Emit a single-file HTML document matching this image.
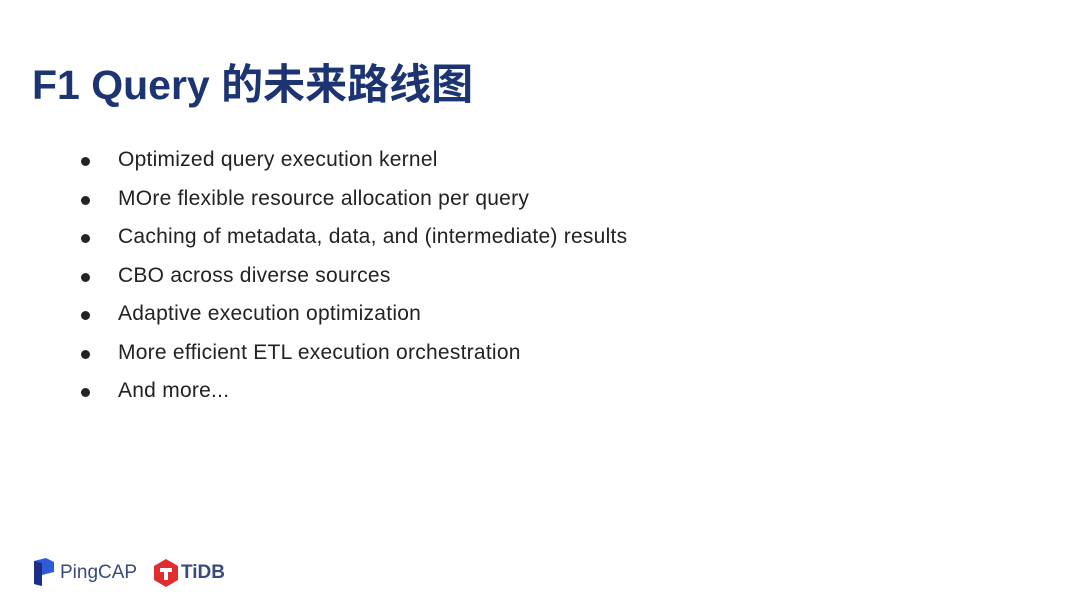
<!DOCTYPE html>
<html><head><meta charset="utf-8"><style>
html,body{margin:0;padding:0;background:#fff;}
body{width:1080px;height:602px;position:relative;overflow:hidden;font-family:"Liberation Sans","Noto Sans CJK SC",sans-serif;}
h1{position:absolute;left:32px;top:55px;margin:0;font-size:41px;font-weight:bold;color:#1c3472;line-height:54px;white-space:nowrap;}
h1 .cj{font-size:42px;font-family:"Noto Sans CJK SC",sans-serif;font-weight:bold;}
.li{position:absolute;left:118px;font-size:21px;color:#222;line-height:24px;white-space:nowrap;letter-spacing:0.25px;}
.li:before{content:"";position:absolute;left:-37px;top:9px;width:9px;height:9px;border-radius:50%;background:#222;}
.logo{position:absolute;top:558px;}
</style></head><body>
<h1>F1 Query <span class="cj">的未来路线图</span></h1>
<div class="li" style="top:148px">Optimized query execution kernel</div>
<div class="li" style="top:187px">MOre flexible resource allocation per query</div>
<div class="li" style="top:225px">Caching of metadata, data, and (intermediate) results</div>
<div class="li" style="top:264px">CBO across diverse sources</div>
<div class="li" style="top:302px">Adaptive execution optimization</div>
<div class="li" style="top:341px">More efficient ETL execution orchestration</div>
<div class="li" style="top:379px">And more...</div>
<svg class="logo" style="left:34px" width="20" height="28" viewBox="0 0 20 28">
<path d="M0 3 L12 0 L20 4 L20 14 L8 17 L8 28 L0 26 Z" fill="#2e5bd8"/>
<path d="M0 3 L8 5 L8 28 L0 26 Z" fill="#1b2f8a"/>
</svg>
<div style="position:absolute;left:60px;top:562px;font-size:19px;color:#3a4a7a;">PingCAP</div>
<svg class="logo" style="left:153px;top:559px" width="26" height="28" viewBox="0 0 26 28">
<path d="M13 0 L25 7 L25 21 L13 28 L1 21 L1 7 Z" fill="#e02d2d"/>
<path d="M7 9 H19 V13 H15 V21 H11 V13 H7 Z" fill="#fff"/>
</svg>
<div style="position:absolute;left:181px;top:562px;font-size:19px;font-weight:bold;color:#3a4a7a;">TiDB</div>
</body></html>
